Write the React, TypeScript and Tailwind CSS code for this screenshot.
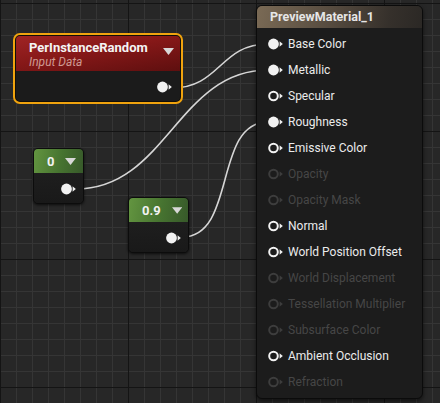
import React from "react";

const W = 440;
const H = 403;

function Grid() {
  const v: number[] = [];
  for (let x = 0; x <= W; x += 16) v.push(x);
  const h: number[] = [];
  for (let y = 3; y <= H; y += 16) h.push(y);
  return (
    <svg className="absolute left-0 top-0" width={W} height={H}>
      {v.filter((x) => x % 128 !== 0).map((x) => (
        <line key={"v" + x} x1={x + 0.5} y1={0} x2={x + 0.5} y2={H} stroke="#353535" strokeWidth={1} />
      ))}
      {h.filter((y) => (y - 3) % 128 !== 0).map((y) => (
        <line key={"h" + y} x1={0} y1={y + 0.5} x2={W} y2={y + 0.5} stroke="#353535" strokeWidth={1} />
      ))}
      {v.filter((x) => x % 128 === 0).map((x) => (
        <line key={"V" + x} x1={x + 0.5} y1={0} x2={x + 0.5} y2={H} stroke="#141414" strokeWidth={1} />
      ))}
      {h.filter((y) => (y - 3) % 128 === 0).map((y) => (
        <line key={"H" + y} x1={0} y1={y + 0.5} x2={W} y2={y + 0.5} stroke="#141414" strokeWidth={1} />
      ))}
    </svg>
  );
}

function Wires() {
  const wire = (x1: number, y1: number, x2: number, y2: number, d: number) =>
    `M${x1},${y1} C${x1 + d},${y1} ${x2 - d},${y2} ${x2},${y2}`;
  return (
    <svg className="absolute left-0 top-0" width={W} height={H}>
      <g fill="none" stroke="#d6d6d6" strokeWidth={1.6} strokeLinecap="round">
        <path d={wire(172, 88, 268, 44, 48)} />
        <path d={wire(76, 189, 268, 70, 90)} />
        <path d={wire(182, 237, 268, 122, 55)} />
      </g>
    </svg>
  );
}

function Pin({ filled, enabled = true }: { filled: boolean; enabled?: boolean }) {
  const c = enabled ? "#f2f2f2" : "#3d3d3d";
  return (
    <svg width={16} height={12} viewBox="0 0 16 12" className="shrink-0">
      {filled ? (
        <circle cx={5.5} cy={6} r={5.4} fill={c} />
      ) : (
        <circle cx={5.5} cy={6} r={4.3} fill="none" stroke={c} strokeWidth={2} />
      )}
      <polygon points="11.6,3.2 14.8,6 11.6,8.8" fill={c} />
    </svg>
  );
}

function Caret() {
  return (
    <svg width={11} height={7} viewBox="0 0 11 7">
      <polygon points="0,0 11,0 5.5,7" fill="#d8d8d8" />
    </svg>
  );
}

const font = { fontFamily: "Roboto, 'Noto Sans', 'Liberation Sans', sans-serif" };

function ConstNode({ left, top, width, value }: { left: number; top: number; width: number; value: string }) {
  return (
    <div
      className="absolute flex flex-col overflow-hidden rounded-[5px] border border-[#0c0c0c] bg-[#1b1b1b] shadow-[0_1px_3px_rgba(0,0,0,0.7)]"
      style={{ left, top, width, height: 56 }}
    >
      <div className="flex h-[24px] items-center gap-[11px] bg-[linear-gradient(100deg,#639540_0%,#467330_55%,#37592a_100%)] pl-[13px] pr-[6px]">
        <span className="text-[13px] font-bold leading-none text-[#f2f2f2]">{value}</span>
        <Caret />
      </div>
      <div className="flex flex-1 justify-end bg-[linear-gradient(to_bottom,#1e1e1e,#191919)] pr-[6px] pt-[10px]">
        <Pin filled />
      </div>
    </div>
  );
}

const pins: { label: string; filled?: boolean; enabled: boolean }[] = [
  { label: "Base Color", filled: true, enabled: true },
  { label: "Metallic", filled: true, enabled: true },
  { label: "Specular", enabled: true },
  { label: "Roughness", filled: true, enabled: true },
  { label: "Emissive Color", enabled: true },
  { label: "Opacity", enabled: false },
  { label: "Opacity Mask", enabled: false },
  { label: "Normal", enabled: true },
  { label: "World Position Offset", enabled: true },
  { label: "World Displacement", enabled: false },
  { label: "Tessellation Multiplier", enabled: false },
  { label: "Subsurface Color", enabled: false },
  { label: "Ambient Occlusion", enabled: true },
  { label: "Refraction", enabled: false },
];

export default function App() {
  return (
    <div className="relative h-[403px] w-[440px] overflow-hidden bg-[#272727]" style={font}>
      <Grid />
      <Wires />

      {/* PerInstanceRandom node (selected) */}
      <div className="absolute left-[13px] top-[33px] h-[71px] w-[170px] rounded-[7px] border-2 border-[#f0a30e] bg-[#120e08] p-[1px]">
        <div className="flex h-full flex-col overflow-hidden rounded-[4px]">
          <div className="relative h-[35px] bg-[linear-gradient(170deg,#a02424_0%,#861818_45%,#5e0f0f_100%)] pl-[13px] pt-[4px]">
            <div className="text-[13px] font-bold leading-[15px] text-[#f4f4f4]">PerInstanceRandom</div>
            <div className="text-[12px] italic leading-[14px] text-[#cf9a92]">Input Data</div>
            <div className="absolute right-[6px] top-[12px]">
              <Caret />
            </div>
          </div>
          <div className="flex flex-1 justify-end bg-[#1b1b1b] pr-[7px] pt-[10px]">
            <Pin filled />
          </div>
        </div>
      </div>

      <ConstNode left={33} top={148} width={51} value="0" />
      <ConstNode left={128} top={197} width={61} value="0.9" />

      {/* PreviewMaterial node */}
      <div className="absolute left-[256px] top-[5px] flex w-[167px] flex-col overflow-hidden rounded-[6px] border border-[#0b0b0b] bg-[#1c1c1c] shadow-[0_2px_4px_rgba(0,0,0,0.6)]">
        <div className="flex h-[22px] items-center bg-[linear-gradient(100deg,#7a6a55_0%,#564b3f_45%,#35302b_80%,#2b2825_100%)] pl-[13px]">
          <span className="text-[12.5px] font-bold leading-none text-[#e6e6e6]">PreviewMaterial_1</span>
        </div>
        <div className="flex flex-col pb-[3px] pl-[11px] pt-[3px]">
          {pins.map((p) => (
            <div key={p.label} className="flex h-[26px] items-center gap-[4px]">
              <Pin filled={!!p.filled} enabled={p.enabled} />
              <span className={"text-[12px] leading-none " + (p.enabled ? "text-[#ebebeb]" : "text-[#464646]")}>
                {p.label}
              </span>
            </div>
          ))}
        </div>
      </div>
    </div>
  );
}
